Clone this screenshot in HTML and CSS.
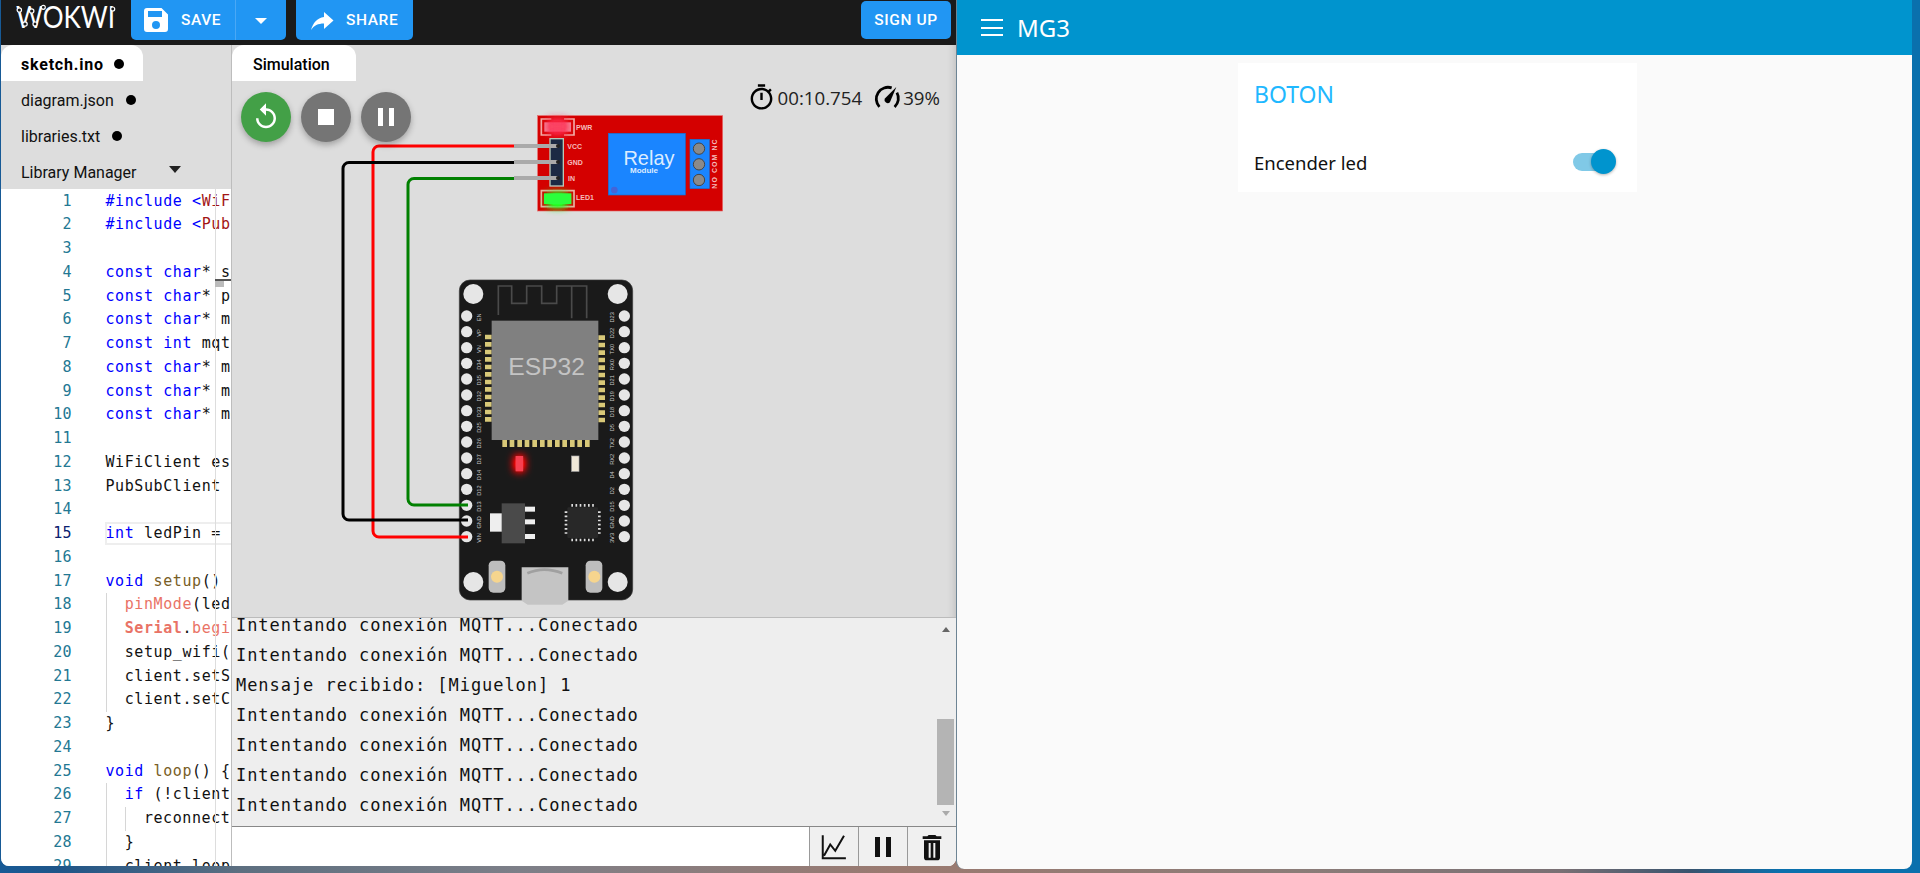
FILE: index.html
```html
<!DOCTYPE html>
<html lang="en">
<head>
<meta charset="utf-8">
<title>Wokwi MG3</title>
<link rel="stylesheet" href="styles.css">
</head>
<body>
<div class="wokwi">
  <header class="topbar">
    <svg class="logo" width="105" height="36" viewBox="0 0 105 36">
      <text class="logo-text" x="3" y="27.500" textLength="99" lengthAdjust="spacingAndGlyphs">WOKWI</text>
      <g class="logo-nodes"><circle cx="6.300" cy="10" r="2.200"/><circle cx="12" cy="24" r="2.200"/><circle cx="18.700" cy="11" r="2.200"/><circle cx="22" cy="24" r="2"/><circle cx="30.300" cy="7.300" r="2"/><circle cx="99.700" cy="9" r="2"/></g>
    </svg>
    <div class="btn save">
      <span class="btn-main">
        <svg class="ic" width="24" height="24" viewBox="0 0 24 24"><path fill="#fff" d="M3 0h14.500L24 6.500V21a3 3 0 0 1-3 3H3a3 3 0 0 1-3-3V3a3 3 0 0 1 3-3zm1 3v6h14V3H4zm8 10a4 4 0 1 0 0 8 4 4 0 0 0 0-8z"/></svg>
        SAVE
      </span>
      <span class="btn-caret"><i class="tri-white"></i></span>
    </div>
    <div class="btn share">
      <svg class="ic" width="24" height="24" viewBox="0 0 24 24"><path fill="#fff" d="M14 4v5C7 10 3 15 1 22c3-4.500 7-6.500 13-6.500V21l9.500-8.500z"/></svg>
      SHARE
    </div>
    <div class="btn signup">SIGN UP</div>
  </header>
  <div class="panes">
    <aside class="files">
      <nav class="tabs">
        <div class="tab active">sketch.ino<i class="dot"></i></div>
        <div class="tab">diagram.json<i class="dot"></i></div>
        <div class="tab">libraries.txt<i class="dot"></i></div>
        <div class="tab">Library Manager<i class="tri-dark"></i></div>
      </nav>
      <div class="code">
        <div class="ruler"></div>
        <div class="cursor-line"></div>
        <div class="cursor-block"></div>
        <div class="ln"><b>1</b><code><s class="k">#include</s> <s class="k">&lt;</s><s class="str">WiFi.h</s><s class="k">&gt;</s></code></div>
        <div class="ln"><b>2</b><code><s class="k">#include</s> <s class="k">&lt;</s><s class="str">PubSubClient.h</s><s class="k">&gt;</s></code></div>
        <div class="ln"><b>3</b><code></code></div>
        <div class="ln"><b>4</b><code><s class="k">const</s> <s class="k">char</s>* ssid = "Wokwi-GUEST";</code></div>
        <div class="ln"><b>5</b><code><s class="k">const</s> <s class="k">char</s>* password = "";</code></div>
        <div class="ln"><b>6</b><code><s class="k">const</s> <s class="k">char</s>* mqtt_server = "";</code></div>
        <div class="ln"><b>7</b><code><s class="k">const</s> <s class="k">int</s> mqtt_port = 1883;</code></div>
        <div class="ln"><b>8</b><code><s class="k">const</s> <s class="k">char</s>* mqtt_user = "";</code></div>
        <div class="ln"><b>9</b><code><s class="k">const</s> <s class="k">char</s>* mqtt_pass = "";</code></div>
        <div class="ln"><b>10</b><code><s class="k">const</s> <s class="k">char</s>* mqtt_topic = "";</code></div>
        <div class="ln"><b>11</b><code></code></div>
        <div class="ln"><b>12</b><code>WiFiClient espClient;</code></div>
        <div class="ln"><b>13</b><code>PubSubClient client(espClient);</code></div>
        <div class="ln"><b>14</b><code></code></div>
        <div class="ln cur"><b>15</b><code><s class="k">int</s> ledPin = 2;</code></div>
        <div class="ln"><b>16</b><code></code></div>
        <div class="ln"><b>17</b><code><s class="k">void</s> <s class="fn">setup</s>() {</code></div>
        <div class="ln"><b>18</b><code><span class="ind"><s class="ard">pinMode</s>(ledPin, OUTPUT);</span></code></div>
        <div class="ln"><b>19</b><code><span class="ind"><s class="ard strong">Serial</s>.<s class="ard">begin</s>(115200);</span></code></div>
        <div class="ln"><b>20</b><code><span class="ind">setup_wifi();</span></code></div>
        <div class="ln"><b>21</b><code><span class="ind">client.setServer(mqtt_server);</span></code></div>
        <div class="ln"><b>22</b><code><span class="ind">client.setCallback(callback);</span></code></div>
        <div class="ln"><b>23</b><code>}</code></div>
        <div class="ln"><b>24</b><code></code></div>
        <div class="ln"><b>25</b><code><s class="k">void</s> <s class="fn">loop</s>() {</code></div>
        <div class="ln"><b>26</b><code><span class="ind"><s class="k">if</s> (!client.connected()) {</span></code></div>
        <div class="ln"><b>27</b><code><span class="ind"><span class="ind">reconnect();</span></span></code></div>
        <div class="ln"><b>28</b><code><span class="ind">}</span></code></div>
        <div class="ln"><b>29</b><code><span class="ind">client.loop();</span></code></div>
      </div>
    </aside>
    <section class="sim">
      <div class="sim-view">
        <svg class="canvas" width="724" height="572" viewBox="232 45 724 572">
          <defs>
            <filter id="glow" x="-150%" y="-150%" width="400%" height="400%">
              <feGaussianBlur stdDeviation="12"/>
              <feComponentTransfer><feFuncA type="linear" slope="1.800"/></feComponentTransfer>
            </filter>
          </defs>

          <!-- relay module -->
          <g transform="translate(480 90) scale(.33333)">
            <rect x="173" y="77" width="555" height="286" fill="#d40000" stroke="#e86a6a" stroke-width="2"/>
            <path d="M214 87h-30v48h30M252 87h30v48h-30M184 302h98v48h-98z" fill="none" stroke="#f0b0a8" stroke-width="5"/>
            <rect x="193" y="97" width="80" height="28" fill="#f08aa0"/>
            <rect x="205" y="88" width="55" height="44" fill="#ff2a50" filter="url(#glow)" opacity=".75"/>
            <rect x="205" y="312" width="55" height="36" fill="#22ff22" filter="url(#glow)"/>
            <rect x="192" y="310" width="82" height="32" fill="#2bff3c"/>
            <rect x="210" y="146" width="40" height="142" fill="#1c2a44" stroke="#b8c8b8" stroke-width="4"/>
            <g class="relay-lbl">
              <text x="288" y="120">PWR</text><text x="262" y="178">VCC</text><text x="262" y="224">GND</text><text x="264" y="272">IN</text><text x="288" y="331">LED1</text>
            </g>
            <rect x="385" y="130" width="231" height="185" fill="#1a85ff" stroke="#1670d0" stroke-width="2"/>
            <text class="relay-big" x="507" y="226" text-anchor="middle">Relay</text>
            <text class="relay-mod" x="492" y="250" text-anchor="middle">Module</text>
            <circle cx="403" cy="300" r="10" fill="#4464d8"/>
            <rect x="630" y="148" width="58" height="148" fill="#1a85ff" stroke="#1670d0" stroke-width="2"/>
            <g fill="#8a8a8a" stroke="#444" stroke-width="3"><circle cx="657" cy="176" r="17"/><circle cx="657" cy="223" r="17"/><circle cx="657" cy="270" r="17"/></g>
            <text class="relay-side" transform="translate(712 296) rotate(-90)" textLength="148">NO COM NC</text>
          </g>
          <g stroke="#aaa" stroke-width="4" fill="none"><path d="M514 146h44M514 162h44M514 178h44"/></g>
          <g fill="#222"><circle cx="558" cy="146" r="2"/><circle cx="558" cy="162" r="2"/><circle cx="558" cy="178" r="2"/></g>

          <!-- ESP32 board -->
          <g transform="translate(440 270) scale(.33333)">
            <rect x="58" y="30" width="520" height="960" rx="32" fill="#1a1a1a" stroke="#3a3a3a" stroke-width="2"/>
            <g fill="#e6e6e6"><circle cx="100" cy="72" r="30"/><circle cx="533" cy="72" r="30"/><circle cx="100" cy="936" r="30"/><circle cx="533" cy="936" r="30"/></g>
            <path d="M175 135V48h40v52h45V48h45v52h45V48h90v97M395 48v97" fill="none" stroke="#4a4a4a" stroke-width="5"/>
            <g fill="#e6e6e6" class="holes">
              <circle cx="80" cy="138" r="17"/><circle cx="80" cy="185" r="17"/><circle cx="80" cy="233" r="17"/><circle cx="80" cy="280" r="17"/><circle cx="80" cy="327" r="17"/><circle cx="80" cy="375" r="17"/><circle cx="80" cy="422" r="17"/><circle cx="80" cy="469" r="17"/><circle cx="80" cy="516" r="17"/><circle cx="80" cy="564" r="17"/><circle cx="80" cy="611" r="17"/><circle cx="80" cy="658" r="17"/><circle cx="80" cy="706" r="17"/><circle cx="80" cy="753" r="17"/><circle cx="80" cy="800" r="17"/>
              <circle cx="553" cy="138" r="17"/><circle cx="553" cy="185" r="17"/><circle cx="553" cy="233" r="17"/><circle cx="553" cy="280" r="17"/><circle cx="553" cy="327" r="17"/><circle cx="553" cy="375" r="17"/><circle cx="553" cy="422" r="17"/><circle cx="553" cy="469" r="17"/><circle cx="553" cy="516" r="17"/><circle cx="553" cy="564" r="17"/><circle cx="553" cy="611" r="17"/><circle cx="553" cy="658" r="17"/><circle cx="553" cy="706" r="17"/><circle cx="553" cy="753" r="17"/><circle cx="553" cy="800" r="17"/>
            </g>
            <g class="pin-lbl">
              <text transform="translate(122 142) rotate(-90)" text-anchor="middle">EN</text><text transform="translate(122 189) rotate(-90)" text-anchor="middle">VP</text><text transform="translate(122 237) rotate(-90)" text-anchor="middle">VN</text><text transform="translate(122 284) rotate(-90)" text-anchor="middle">D34</text><text transform="translate(122 331) rotate(-90)" text-anchor="middle">D35</text><text transform="translate(122 379) rotate(-90)" text-anchor="middle">D32</text><text transform="translate(122 426) rotate(-90)" text-anchor="middle">D33</text><text transform="translate(122 473) rotate(-90)" text-anchor="middle">D25</text><text transform="translate(122 520) rotate(-90)" text-anchor="middle">D26</text><text transform="translate(122 568) rotate(-90)" text-anchor="middle">D27</text><text transform="translate(122 615) rotate(-90)" text-anchor="middle">D14</text><text transform="translate(122 662) rotate(-90)" text-anchor="middle">D12</text><text transform="translate(122 710) rotate(-90)" text-anchor="middle">D13</text><text transform="translate(122 757) rotate(-90)" text-anchor="middle">GND</text><text transform="translate(122 804) rotate(-90)" text-anchor="middle">VIN</text>
              <text transform="translate(523 142) rotate(-90)" text-anchor="middle">D23</text><text transform="translate(523 189) rotate(-90)" text-anchor="middle">D22</text><text transform="translate(523 237) rotate(-90)" text-anchor="middle">TX0</text><text transform="translate(523 284) rotate(-90)" text-anchor="middle">RX0</text><text transform="translate(523 331) rotate(-90)" text-anchor="middle">D21</text><text transform="translate(523 379) rotate(-90)" text-anchor="middle">D19</text><text transform="translate(523 426) rotate(-90)" text-anchor="middle">D18</text><text transform="translate(523 473) rotate(-90)" text-anchor="middle">D5</text><text transform="translate(523 520) rotate(-90)" text-anchor="middle">TX2</text><text transform="translate(523 568) rotate(-90)" text-anchor="middle">RX2</text><text transform="translate(523 615) rotate(-90)" text-anchor="middle">D4</text><text transform="translate(523 662) rotate(-90)" text-anchor="middle">D2</text><text transform="translate(523 710) rotate(-90)" text-anchor="middle">D15</text><text transform="translate(523 757) rotate(-90)" text-anchor="middle">GND</text><text transform="translate(523 804) rotate(-90)" text-anchor="middle">3V3</text>
            </g>
            <g fill="#d8c878">
              <path d="M135 194h20v14h-20zM135 216h20v14h-20zM135 239h20v14h-20zM135 261h20v14h-20zM135 284h20v14h-20zM135 306h20v14h-20zM135 329h20v14h-20zM135 351h20v14h-20zM135 374h20v14h-20zM135 396h20v14h-20zM135 419h20v14h-20zM135 441h20v14h-20z"/>
              <path d="M475 196h20v14h-20zM475 218h20v14h-20zM475 241h20v14h-20zM475 263h20v14h-20zM475 286h20v14h-20zM475 308h20v14h-20zM475 331h20v14h-20zM475 353h20v14h-20zM475 376h20v14h-20zM475 398h20v14h-20zM475 421h20v14h-20zM475 443h20v14h-20z"/>
              <path d="M187 510h14v21h-14zM209 510h14v21h-14zM232 510h14v21h-14zM254 510h14v21h-14zM277 510h14v21h-14zM300 510h14v21h-14zM322 510h14v21h-14zM345 510h14v21h-14zM367 510h14v21h-14zM390 510h14v21h-14zM412 510h14v21h-14zM435 510h14v21h-14z"/>
            </g>
            <rect x="155" y="152" width="320" height="358" fill="#808080"/>
            <text class="esp-text" x="320" y="316" text-anchor="middle">ESP32</text>
            <rect x="224" y="558" width="28" height="46" fill="#ff1010" filter="url(#glow)"/>
            <rect x="227" y="558" width="22" height="46" fill="#f84050"/>
            <rect x="395" y="558" width="22" height="46" fill="#f0e8d8" stroke="#aaa" stroke-width="2"/>
            <rect x="150" y="730" width="38" height="55" fill="#eee"/>
            <rect x="185" y="700" width="70" height="120" fill="#4a4a4a"/>
            <g fill="#eee"><rect x="255" y="710" width="30" height="15"/><rect x="255" y="748" width="30" height="15"/><rect x="255" y="792" width="30" height="15"/></g>
            <rect x="382" y="712" width="92" height="92" fill="#282828" rx="4"/>
            <g stroke="#ddd" stroke-width="8" stroke-dasharray="5 7.500" fill="none"><path d="M394 706h74M394 810h74M378 724v74M478 724v74"/></g>
            <g>
              <rect x="146" y="872" width="50" height="96" rx="14" fill="#bdbdbd"/>
              <circle cx="171" cy="920" r="18" fill="#f6d58e"/>
              <rect x="437" y="872" width="50" height="96" rx="14" fill="#bdbdbd"/>
              <circle cx="463" cy="920" r="18" fill="#f6d58e"/>
            </g>
            <path d="M245 892h140v100l-18 12h-104l-18-12z" fill="#c4c4c4"/>
            <path d="M262 910q50-22 105 0" fill="none" stroke="#a0a0a0" stroke-width="8"/>
          </g>

          <!-- wires -->
          <g fill="none" stroke-width="3">
            <path stroke="#f00" d="M514 146H379a6 6 0 0 0-6 6v379a6 6 0 0 0 6 6h89"/>
            <path stroke="#008000" d="M514 178.500H414a6 6 0 0 0-6 6V499a6 6 0 0 0 6 6h54"/>
            <path stroke="#000" d="M514 162.500H349a6 6 0 0 0-6 6V514a6 6 0 0 0 6 6h119"/>
          </g>
        </svg>
        <div class="sim-tabs"><div class="tab active sim-tab">Simulation</div></div>
        <div class="controls">
          <div class="round green"><svg width="30" height="30" viewBox="0 0 24 24"><path fill="#fff" d="M12 5V1L7 6l5 5V7c3.310 0 6 2.690 6 6s-2.690 6-6 6-6-2.690-6-6H4c0 4.420 3.580 8 8 8s8-3.580 8-8-3.580-8-8-8z"/></svg></div>
          <div class="round"><i class="stop"></i></div>
          <div class="round"><i class="pause-bars"></i></div>
          <div class="stats">
            <svg width="29" height="29" viewBox="0 0 24 24"><path fill="#000" d="M15 1H9v2h6V1zm-4 13h2V8h-2v6zm8.030-6.610l1.420-1.420c-.43-.51-.9-.99-1.410-1.410l-1.420 1.420C16.070 4.740 14.120 4 12 4c-4.970 0-9 4.030-9 9s4.020 9 9 9 9-4.030 9-9c0-2.120-.74-4.070-1.970-5.610zM12 20c-3.870 0-7-3.130-7-7s3.130-7 7-7 7 3.130 7 7-3.130 7-7 7z"/></svg>
            <span class="stat-time">00:10.754</span>
            <svg class="gauge" width="28" height="28" viewBox="0 0 24 24"><path fill="none" stroke="#000" stroke-width="2.400" d="M5.500 20.500A10 10 0 0 1 16 4.200M20.500 8.200A10 10 0 0 1 18.500 20.500"/><path d="M20 3.500L14.500 16.500a2.800 2.800 0 0 1-4.500-3z" fill="#000"/></svg>
            <span>39%</span>
          </div>
        </div>
      </div>
      <div class="serial">
        <div class="log">
          <div class="log-line first">Intentando conexión MQTT...Conectado</div>
          <div class="log-line">Intentando conexión MQTT...Conectado</div>
          <div class="log-line">Mensaje recibido: [Miguelon] 1</div>
          <div class="log-line">Intentando conexión MQTT...Conectado</div>
          <div class="log-line">Intentando conexión MQTT...Conectado</div>
          <div class="log-line">Intentando conexión MQTT...Conectado</div>
          <div class="log-line">Intentando conexión MQTT...Conectado</div>
        </div>
        <div class="sbar"><i class="sb-up"></i><i class="sb-thumb"></i><i class="sb-down"></i></div>
      </div>
      <div class="inputbar">
        <div class="input"></div>
        <div class="ibtn"><svg width="30" height="30" viewBox="0 0 24 24"><path fill="none" stroke="#111" stroke-width="1.600" d="M3 2.500V21h18.500M4 19l5-9 4 5 7-12"/></svg></div>
        <div class="ibtn"><i class="pause-dark"></i></div>
        <div class="ibtn"><svg width="32" height="32" viewBox="0 0 24 24"><path fill="#111" fill-rule="evenodd" d="M6 20c0 1.100.9 2 2 2h8c1.100 0 2-.9 2-2V7H6v13zm3.500-11h1.500v11H9.500V9zm3.500 0h1.500v11H13V9zM19 4h-3.500l-1-1h-5l-1 1H5v2h14V4z"/></svg></div>
      </div>
    </section>
  </div>
</div>
<div class="dash">
  <header class="dash-top">
    <span class="burger"><i></i><i></i><i></i></span>
    <span class="dash-title">MG3</span>
  </header>
  <div class="dash-body">
    <div class="card">
      <h2 class="card-title">BOTON</h2>
      <div class="card-row">
        <span>Encender led</span>
        <span class="switch"><i class="knob"></i></span>
      </div>
    </div>
  </div>
</div>
</body>
</html>
```
FILE: styles.css
```css
* { box-sizing: border-box; }
html, body { margin: 0; height: 873px; overflow: hidden; }
body {
  display: flex;
  align-items: flex-start;
  padding-left: 1px;
  background: linear-gradient(90deg, #175a96 0, #1f5588 60px, #5d6f80 240px, #7d7f88 520px, #9b7a70 900px, #8b7c78 1300px, #7a7074 1560px, #38536e 1690px, #0a70ad 1780px, #0a70ad 1920px);
  font-family: Roboto, "Liberation Sans", sans-serif;
}
.wokwi {
  width: 955px; height: 866px;
  display: flex; flex-direction: column;
  overflow: hidden;
  border-radius: 0 0 8px 8px;
  background: #ddd;
}
.topbar { height: 45px; flex: none; background: #1a1a1a; display: flex; align-items: flex-start; }
.logo { margin-left: 12px; flex: none; }
.logo-text { font-family: Lato, sans-serif; font-weight: 400; font-size: 30px; fill: #fff; }
.logo-nodes circle { fill: #1a1a1a; stroke: #fff; stroke-width: 1.200; }
.btn {
  background: #2196f3; color: #fff; font-weight: 500; font-size: 15.500px; letter-spacing: .6px;
  display: flex; align-items: center; height: 40px; border-radius: 0 0 5px 5px;
}
.save { width: 155px; margin-left: 13px; }
.btn-main { display: flex; align-items: center; gap: 13px; padding-left: 13px; width: 104.500px; height: 100%; border-right: 1px solid #4aa8f5; }
.btn-caret { flex: 1; display: flex; justify-content: center; padding-top: 1px; }
.tri-white { border: 6.500px solid transparent; border-top: 6.500px solid #fff; border-bottom: 0; }
.share { width: 117px; margin-left: 10px; padding-left: 14px; gap: 12px; }
.signup { width: 90px; height: 38px; margin: 1px 5px 0 auto; justify-content: center; border-radius: 5px; }

.panes { flex: 1; display: flex; min-height: 0; }
.files { width: 231px; flex: none; display: flex; flex-direction: column; border-right: 1px solid #bdbdbd; }
.tabs { height: 144px; flex: none; display: flex; flex-direction: column; }
.tab {
  height: 36px; display: flex; align-items: center; padding: 2px 0 0 20px;
  font-size: 16px; color: #111; position: relative;
}
.tab.active { width: 142px; background: #fff; font-weight: 700; border-radius: 12px 12px 0 0; letter-spacing: .8px; color: #000; }
.dot { width: 10px; height: 10px; border-radius: 50%; background: #000; margin-left: 12px; }
.tab.active .dot { margin-left: 10px; }
.tri-dark { border: 6px solid transparent; border-top: 7px solid #222; border-bottom: 0; margin-left: 32px; margin-top: -5px; }

.code {
  flex: 1; background: #fff; overflow: hidden; position: relative; padding-top: .5px;
  font-family: "DejaVu Sans Mono", "Liberation Mono", monospace;
  font-size: 15px; letter-spacing: .59px; color: #111;
}
.ln { display: flex; height: 23.750px; line-height: 23.750px; white-space: pre; }
.ln b { width: 71px; flex: none; text-align: right; font-weight: 400; color: #237893; letter-spacing: .4px; }
.ln code { font: inherit; margin-left: 33.500px; display: block; }
.ln.cur b { color: #0b216f; }
.ln.cur { position: relative; }
.ln.cur::after { content: ""; position: absolute; left: 104px; top: 0; right: 0; bottom: 1px; border: 2px solid #eee; border-right: 0; }
.ln s { text-decoration: none; }
.k { color: #00f; }
.str { color: #a31515; }
.fn { color: #795e26; }
.ard { color: #e97366; }
.strong { font-weight: 700; }
.ind { display: inline-block; height: 23.750px; padding-left: 18.200px; border-left: 1px solid #d6d6d6; }
.ruler { position: absolute; left: 214px; top: 0; bottom: 0; width: 1px; background: #ddd; z-index: 2; }
.cursor-line { position: absolute; left: 214px; right: 0; top: 90px; height: 2px; background: #555; z-index: 2; }
.cursor-block { position: absolute; left: 214px; width: 9px; top: 92px; height: 6px; background: #bbb; z-index: 2; }

.sim { flex: 1; display: flex; flex-direction: column; min-width: 0; }
.sim-view { height: 572px; flex: none; position: relative; background: #ddd; box-shadow: inset -9px 0 8px -8px rgba(0,0,0,.16); }
.canvas { position: absolute; left: 0; top: 0; }
.sim-tabs { position: relative; height: 36px; }
.tab.sim-tab { width: 124px; padding-left: 21px; font-weight: 500; letter-spacing: 0; }
.controls { position: relative; display: flex; gap: 10px; padding: 11px 16px 0 9px; align-items: flex-start; }
.round {
  width: 50px; height: 50px; border-radius: 50%; background: #757575;
  display: flex; align-items: center; justify-content: center;
  box-shadow: 0 3px 6px rgba(0,0,0,.28);
}
.green { background: #43a047; }
.stop { width: 16px; height: 16px; background: #fff; display: block; }
.pause-bars { width: 16px; height: 18px; border-left: 5.500px solid #fff; border-right: 5.500px solid #fff; display: block; }
.stats {
  margin-left: auto; display: flex; align-items: center; height: 26px; margin-top: -8px; gap: 2px;
  font-family: "Open Sans", sans-serif; font-size: 18.700px; color: #222;
}
.gauge { margin-left: 9px; }
.relay-lbl text { font-family: "Liberation Sans", sans-serif; font-weight: 700; font-size: 21px; fill: #f4bcbc; }
.relay-side { font-family: "Liberation Sans", sans-serif; font-weight: 700; font-size: 21px; fill: #f4bcbc; }
.relay-big { font-family: "Liberation Sans", sans-serif; font-size: 60px; fill: #dcecff; }
.relay-mod { font-family: "Liberation Sans", sans-serif; font-weight: 700; font-size: 24px; fill: #dcecff; }
.pin-lbl text { font-family: "Liberation Sans", sans-serif; font-size: 17px; fill: #c8c8c8; }
.esp-text { font-family: "Liberation Sans", sans-serif; font-size: 74px; fill: #c4c4c4; }

.serial { height: 209px; flex: none; background: #eee; border-top: 1px solid #bbb; display: flex; overflow: hidden; }
.log {
  flex: 1; min-width: 0; padding-left: 4px;
  font-family: "DejaVu Sans Mono", "Liberation Mono", monospace;
  font-size: 17px; letter-spacing: .95px; color: #111;
}
.log-line { height: 30px; line-height: 30px; white-space: pre; }
.first { margin-top: -8px; }
.sbar { width: 17px; margin-right: 2px; display: flex; flex-direction: column; align-items: center; }
.sb-up { margin-top: 9px; border: 4.500px solid transparent; border-bottom: 5px solid #666; border-top: 0; }
.sb-thumb { width: 17px; height: 86px; background: #b4b4b4; margin-top: 87px; }
.sb-down { margin-top: 6px; border: 4.500px solid transparent; border-top: 5px solid #aaa; border-bottom: 0; }
.inputbar { flex: 1; display: flex; border-top: 1px solid #888; background: #fff; }
.input { flex: 1; }
.ibtn { width: 49px; background: #f0f0f0; border-left: 1px solid #999; display: flex; align-items: center; justify-content: center; }
.pause-dark { width: 16px; height: 20px; border-left: 5px solid #111; border-right: 5px solid #111; display: block; }

.dash { width: 956px; height: 869px; border-left: 1px solid #6d8494; background: #fafafa; border-radius: 0 0 8px 8px; overflow: hidden; display: flex; flex-direction: column; }
.dash-top { height: 55px; flex: none; background: #0094ce; color: #fff; display: flex; align-items: center; padding-left: 24px; }
.burger { width: 22px; height: 17px; display: flex; flex-direction: column; justify-content: space-between; }
.burger i { height: 2px; background: #fff; display: block; }
.dash-title { font-family: "Noto Sans", "Open Sans", sans-serif; font-size: 24px; margin-left: 14px; }
.dash-body { padding: 8px 0 0 281px; font-family: "Noto Sans", "Open Sans", sans-serif; }
.card { width: 399px; height: 129px; background: #fff; padding: 0 17px 0 16px; color: #111; }
.card-title { margin: 0; padding-top: 14px; font-size: 23px; line-height: 34px; font-weight: 400; color: #1fb8ff; }
.card-row { display: flex; justify-content: space-between; align-items: center; margin-top: 27px; height: 48px; font-size: 18.500px; }
.switch { position: relative; width: 38px; height: 18px; border-radius: 9px; background: #80c9e7; margin-right: 9px; }
.knob { position: absolute; right: -5px; top: -4px; width: 25px; height: 25px; border-radius: 50%; background: #0094ce; box-shadow: 0 1px 3px rgba(0,0,0,.3); }
```
